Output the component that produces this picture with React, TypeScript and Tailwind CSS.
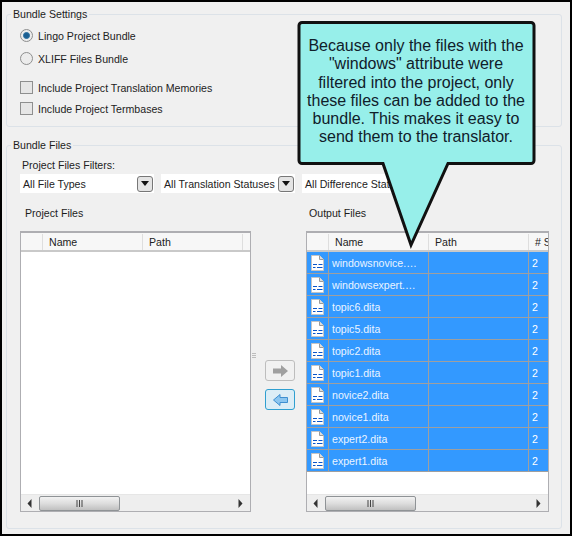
import type { ReactNode } from "react";

const rows = [
  "windowsnovice.…",
  "windowsexpert.…",
  "topic6.dita",
  "topic5.dita",
  "topic2.dita",
  "topic1.dita",
  "novice2.dita",
  "novice1.dita",
  "expert2.dita",
  "expert1.dita",
];

function Group({ title, className, children }: { title: string; className: string; children: ReactNode }) {
  return (
    <fieldset className={`rounded-[3px] border border-[#dce2e8] ${className}`}>
      <legend className="ml-[-9px] px-[2px] text-[#1c1c1c]">{title}</legend>
      {children}
    </fieldset>
  );
}

function Radio({ checked, label }: { checked?: boolean; label: string }) {
  return (
    <div className="flex h-[23px] items-center gap-[5px]">
      <span className="flex h-[13px] w-[13px] items-center justify-center rounded-full border border-[#8e8f8f] bg-[#ececec]">
        {checked && <span className="h-[7px] w-[7px] rounded-full border border-[#2a6f9f] bg-[#1b5f92]" />}
      </span>
      <span>{label}</span>
    </div>
  );
}

function Check({ label }: { label: string }) {
  return (
    <div className="flex h-[21px] items-center gap-[5px]">
      <span className="h-[13px] w-[13px] border border-[#8e8f8f] bg-[#e6e6e6]" />
      <span>{label}</span>
    </div>
  );
}

function Select({ label, className }: { label: string; className: string }) {
  return (
    <div className={`flex h-[19px] items-center justify-between bg-white pl-[3px] pr-[1px] ${className}`}>
      <span className="whitespace-nowrap">{label}</span>
      <span className="flex h-[16px] w-[16px] shrink-0 items-center justify-center rounded-[3px] border border-[#777] bg-[#e4e4e4]">
        <svg width="8" height="5" viewBox="0 0 8 5">
          <path d="M0 0h8L4 5z" fill="#111" />
        </svg>
      </span>
    </div>
  );
}

function FileIcon() {
  return (
    <svg width="13" height="16" viewBox="0 0 13 16" className="shrink-0">
      <path d="M.5.5h8l4 4v11H.5z" fill="#fff" stroke="#c4c4c4" />
      <path d="M8.500.5v4h4" fill="#dedede" stroke="#9a9a9a" />
      <path d="M2 9.500h4M7.500 9.500h4M2 12.500h2.500M6 12.500h5.500" stroke="#0a55c9" />
    </svg>
  );
}

function HeadCell({ label, className }: { label: string; className: string }) {
  return (
    <div className={`flex h-full shrink-0 items-center overflow-hidden border-r border-[#dedede] pl-[6px] ${className}`}>
      {label}
    </div>
  );
}

function Scrollbar({ thumb }: { thumb: string }) {
  return (
    <div className="flex h-[17px] items-center border-t border-[#e6e6e6] bg-[#eeeeee] px-[2px]">
      <svg width="16" height="9" viewBox="0 0 16 9" className="shrink-0">
        <path d="M4.500 4.500 8.500 0v9z" fill="#333" />
      </svg>
      <div className={`flex h-[15px] items-center justify-center rounded-[2px] border border-[#8f9396] bg-gradient-to-b from-[#f2f2f2] via-[#dddddd] to-[#c0c0c0] ${thumb}`}>
        <svg width="8" height="7" viewBox="0 0 8 7">
          <path d="M1 0v7M3.500 0v7M6 0v7" stroke="#444" />
        </svg>
      </div>
      <div className="flex-1" />
      <svg width="16" height="9" viewBox="0 0 16 9" className="shrink-0">
        <path d="M10.500 4.500 6.500 0v9z" fill="#333" />
      </svg>
    </div>
  );
}

function ArrowButton({ dir, active }: { dir: "right" | "left"; active?: boolean }) {
  return (
    <div
      className={`flex h-[21px] w-[30px] items-center justify-center rounded-[3px] border ${
        active ? "border-[#2f9fd0] bg-[#dcedf6]" : "border-[#bdbdbd] bg-[#f1f1f1]"
      }`}
    >
      <svg width="15" height="12" viewBox="0 0 15 12">
        {dir === "right" ? (
          <path d="M0 3.500h8V0l7 6-7 6V8.500H0z" fill="#a0a0a0" />
        ) : (
          <path d="M14.500 3.500H7V.5L.5 6 7 11.500v-3h7.500z" fill="#8cc6f0" stroke="#3f8fd0" />
        )}
      </svg>
    </div>
  );
}

function Table({ title, titleClass, className, children }: { title: string; titleClass: string; className: string; children: ReactNode }) {
  return (
    <div className={`flex flex-col ${className}`}>
      <div className={`h-[25px] leading-[14px] text-[#1c1c1c] ${titleClass}`}>{title}</div>
      <div className="flex h-[281px] flex-col overflow-hidden border border-t-2 border-[#aeaeb2] bg-white">
        {children}
      </div>
    </div>
  );
}

export default function App() {
  return (
    <div className="relative h-[536px] w-[572px] overflow-hidden border-2 border-black bg-[#f0f0f0] font-['Liberation_Sans',sans-serif] text-[10.600px] leading-[14px] text-[#222]">
      <div className="flex flex-col pl-[4px] pr-[8px] pt-[5px]">
        <Group title="Bundle Settings" className="h-[120px] pl-[13px] pt-[3px]">
          <Radio checked label="Lingo Project Bundle" />
          <Radio label="XLIFF Files Bundle" />
          <div className="mt-[7px]">
            <Check label="Include Project Translation Memories" />
            <Check label="Include Project Termbases" />
          </div>
        </Group>

        <Group title="Bundle Files" className="mt-[11px] h-[391px] pl-[13px] pt-[6px]">
          <div className="ml-[2px] h-[16px]">Project Files Filters:</div>
          <div className="flex gap-[7px]">
            <Select label="All File Types" className="w-[134px]" />
            <Select label="All Translation Statuses" className="w-[134px]" />
            <Select label="All Difference Statuses" className="w-[134px]" />
          </div>

          <div className="mt-[13px] flex items-start">
            <Table title="Project Files" titleClass="ml-[5px]" className="w-[231px]">
              <div className="flex h-[19px] shrink-0 items-center border-b-2 border-[#c9c9c9] bg-[#f7f7f7] pt-px">
                <HeadCell label="" className="w-[22px]" />
                <HeadCell label="Name" className="w-[100px]" />
                <HeadCell label="Path" className="w-[100px]" />
              </div>
              <div className="flex-1" />
              <Scrollbar thumb="w-[81px]" />
            </Table>

            <div className="flex w-[55px] shrink-0 pt-[154px]">
              <div className="ml-[1px] mt-[-7px] flex h-[5px] w-[4px] flex-col justify-between">
                <div className="h-px bg-[#bdbdbd]" />
                <div className="h-px bg-[#bdbdbd]" />
                <div className="h-px bg-[#bdbdbd]" />
              </div>
              <div className="ml-[9px] flex flex-col gap-[8px]">
                <ArrowButton dir="right" />
                <ArrowButton dir="left" active />
              </div>
            </div>

            <Table title="Output Files" titleClass="ml-[3px]" className="w-[243px]">
              <div className="flex h-[19px] shrink-0 items-center border-b-2 border-[#c9c9c9] bg-[#f7f7f7] pt-px">
                <HeadCell label="" className="w-[22px]" />
                <HeadCell label="Name" className="w-[100px]" />
                <HeadCell label="Path" className="w-[100px]" />
                <div className="whitespace-nowrap pl-[6px]"># S</div>
              </div>
              <div className="flex flex-col">
                {rows.map((name) => (
                  <div key={name} className="flex h-[22px] shrink-0 items-center border-b border-[#9f9f9f] bg-[#3399ff] text-white">
                    <div className="flex h-full w-[22px] shrink-0 items-center justify-center border-r border-[#9f9f9f]">
                      <FileIcon />
                    </div>
                    <div className="flex h-full w-[100px] shrink-0 items-center border-r border-[#9f9f9f] pl-[3px] text-[#eaf4ff]">{name}</div>
                    <div className="h-full w-[100px] shrink-0 border-r border-[#9f9f9f]" />
                    <div className="pl-[3px]">2</div>
                  </div>
                ))}
              </div>
              <div className="flex-1" />
              <Scrollbar thumb="w-[91px]" />
            </Table>
          </div>
        </Group>
      </div>

      {/* callout laid over the dialog */}
      <svg width="244" height="234" viewBox="0 0 244 234" className="absolute left-[295px] top-[18px]">
        <path
          d="M5 2.500h229a3 3 0 0 1 3 3v135a3 3 0 0 1-3 3H151L114 225 86 143.500H5a3 3 0 0 1-3-3v-135a3 3 0 0 1 3-3z"
          fill="#97efea"
          stroke="#111"
          strokeWidth="3"
        />
      </svg>
      <div className="absolute left-[297px] top-[35px] w-[234px] text-center font-['Liberation_Sans',sans-serif] text-[16px] leading-[18.300px] text-[#10202a]">
        Because only the files with the
        <br />
        "windows" attribute were
        <br />
        filtered into the project, only
        <br />
        these files can be added to the
        <br />
        bundle. This makes it easy to
        <br />
        send them to the translator.
      </div>
    </div>
  );
}
